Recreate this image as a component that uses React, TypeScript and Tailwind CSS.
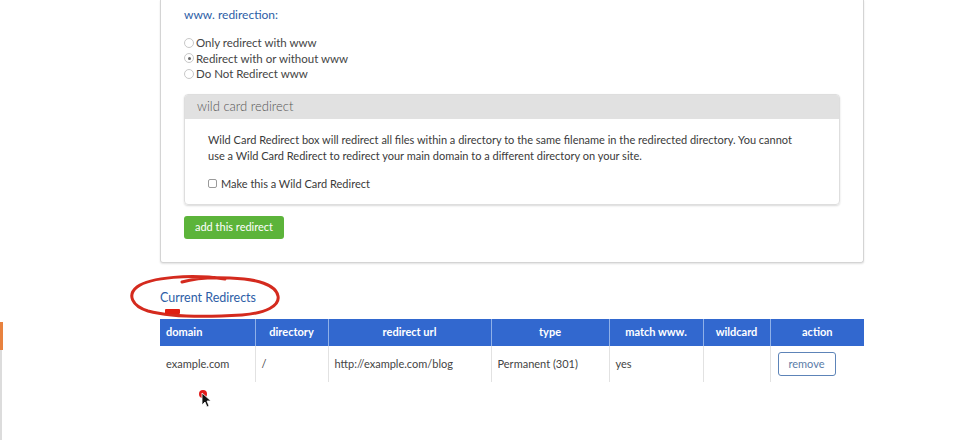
import React from 'react';

const font = { fontFamily: 'Lato, "Open Sans", sans-serif' };

const Radio = ({ checked, label }: { checked?: boolean; label: string }) => (
  <label className="flex items-center h-[15.5px] leading-[15px] text-[11.5px] text-[#444]">
    <span className="w-[10px] h-[10px] rounded-full border border-[#c8c8c8] bg-white flex items-center justify-center mr-[2px]">
      {checked && <span className="w-[3px] h-[3px] rounded-full bg-[#666]" />}
    </span>
    {label}
  </label>
);

const headers = [
  { label: 'domain', w: 'w-[95px]', align: 'text-left pl-[6px]' },
  { label: 'directory', w: 'w-[73px]', align: 'text-center' },
  { label: 'redirect url', w: 'w-[163px]', align: 'text-center' },
  { label: 'type', w: 'w-[118px]', align: 'text-center' },
  { label: 'match www.', w: 'w-[94px]', align: 'text-center' },
  { label: 'wildcard', w: 'w-[67px]', align: 'text-center' },
  { label: 'action', w: 'w-[94px]', align: 'text-center' },
];

export default function App() {
  return (
    <div className="relative flex h-[440px] w-[971px] overflow-hidden bg-white" style={font}>
      <div className="flex flex-col w-[3px]">
        <div className="h-[322px]" />
        <div className="h-[28px] bg-[#e8823f]" />
        <div className="flex-1 bg-[#dcdcdc] w-[2px]" />
      </div>

      <div className="ml-[157px] w-[704px] flex flex-col">
        {/* top card */}
        <div className="border border-t-0 border-[#d4d4d4] rounded-b-[3px] shadow-[0_1px_2px_rgba(0,0,0,0.12)] pl-[23px] pr-[23px] pt-[7px] pb-[23px]">
          <div className="text-[12px] text-[#2d5ea6] h-[16px] leading-[16px]">www. redirection:</div>
          <div className="mt-[12px] flex flex-col">
            <Radio label="Only redirect with www" />
            <Radio checked label="Redirect with or without www" />
            <Radio label="Do Not Redirect www" />
          </div>

          <div className="mt-[12px] rounded-[4px] border border-[#dedede] shadow-[0_1px_2px_rgba(0,0,0,0.15)] overflow-hidden">
            <div className="bg-[#e1e1e1] h-[24px] flex items-center pl-[12px] text-[13px] text-[#555] font-light">
              wild card redirect
            </div>
            <div className="pl-[23px] pr-[20px] pt-[13px] pb-[12px]">
              <p className="text-[11px] leading-[16px] text-[#3a3a3a]">
                Wild Card Redirect box will redirect all files within a directory to the same filename in the redirected directory. You cannot
                <br />
                use a Wild Card Redirect to redirect your main domain to a different directory on your site.
              </p>
              <label className="mt-[12px] flex items-center text-[11px] text-[#3a3a3a]">
                <span className="w-[9px] h-[9px] border border-[#9a9a9a] rounded-[2px] bg-white mr-[4px]" />
                Make this a Wild Card Redirect
              </label>
            </div>
          </div>

          <button className="mt-[11px] h-[23px] w-[100px] rounded-[3px] bg-[#5cb43a] text-white text-[11px] flex items-center justify-center">
            add this redirect
          </button>
        </div>

        {/* current redirects */}
        <div className="relative mt-[26px] h-[30px]">
          <div className="text-[12.5px] text-[#2d5ea6] leading-[16px] pt-[1px]">Current Redirects</div>
          <svg className="absolute left-[-30px] top-[-14px]" width="160" height="48" viewBox="0 0 160 48" fill="none">
            <path
              d="M95 4 C62 -1 20 2 7 12 C-3 20 2 31 18 36 C40 42 80 42 112 40 C136 38 150 31 148 21 C146 10 128 4 100 3 C80 2 62 4 52 7"
              stroke="#d42a1e"
              strokeWidth="3"
              strokeLinecap="round"
            />
            <rect x="35" y="34" width="15" height="5" rx="1" fill="#e01e12" />
          </svg>
        </div>

        <table className="border-collapse text-[11px] w-[704px]">
          <thead>
            <tr className="bg-[#3268cf] text-white h-[27px]">
              {headers.map((h, i) => (
                <th
                  key={h.label}
                  className={`${h.w} ${h.align} font-bold ${i > 0 ? 'border-l border-[#8fb0e8]' : ''}`}
                >
                  {h.label}
                </th>
              ))}
            </tr>
          </thead>
          <tbody>
            <tr className="h-[36px] text-[#444]">
              <td className="pl-[6px]">example.com</td>
              <td className="pl-[6px] border-l border-[#e2e2e2]">/</td>
              <td className="pl-[6px] border-l border-[#e2e2e2]">http://example.com/blog</td>
              <td className="pl-[6px] border-l border-[#e2e2e2]">Permanent (301)</td>
              <td className="pl-[6px] border-l border-[#e2e2e2]">yes</td>
              <td className="border-l border-[#e2e2e2]" />
              <td className="border-l border-[#e2e2e2] pl-[7px]">
                <button className="w-[58px] h-[24px] rounded-[3px] border border-[#5d84b8] text-[#5a7ca8] text-[11px]">
                  remove
                </button>
              </td>
            </tr>
          </tbody>
        </table>
      </div>

      {/* cursor */}
      <svg className="absolute left-[198px] top-[389px]" width="16" height="20" viewBox="0 0 16 20">
        <circle cx="5" cy="5" r="4" fill="#e21b1b" />
        <path d="M4 4 L4 16 L7 13 L9 18 L11 17 L9 12 L13 12 Z" fill="#111" stroke="#fff" strokeWidth="0.8" />
      </svg>
    </div>
  );
}
